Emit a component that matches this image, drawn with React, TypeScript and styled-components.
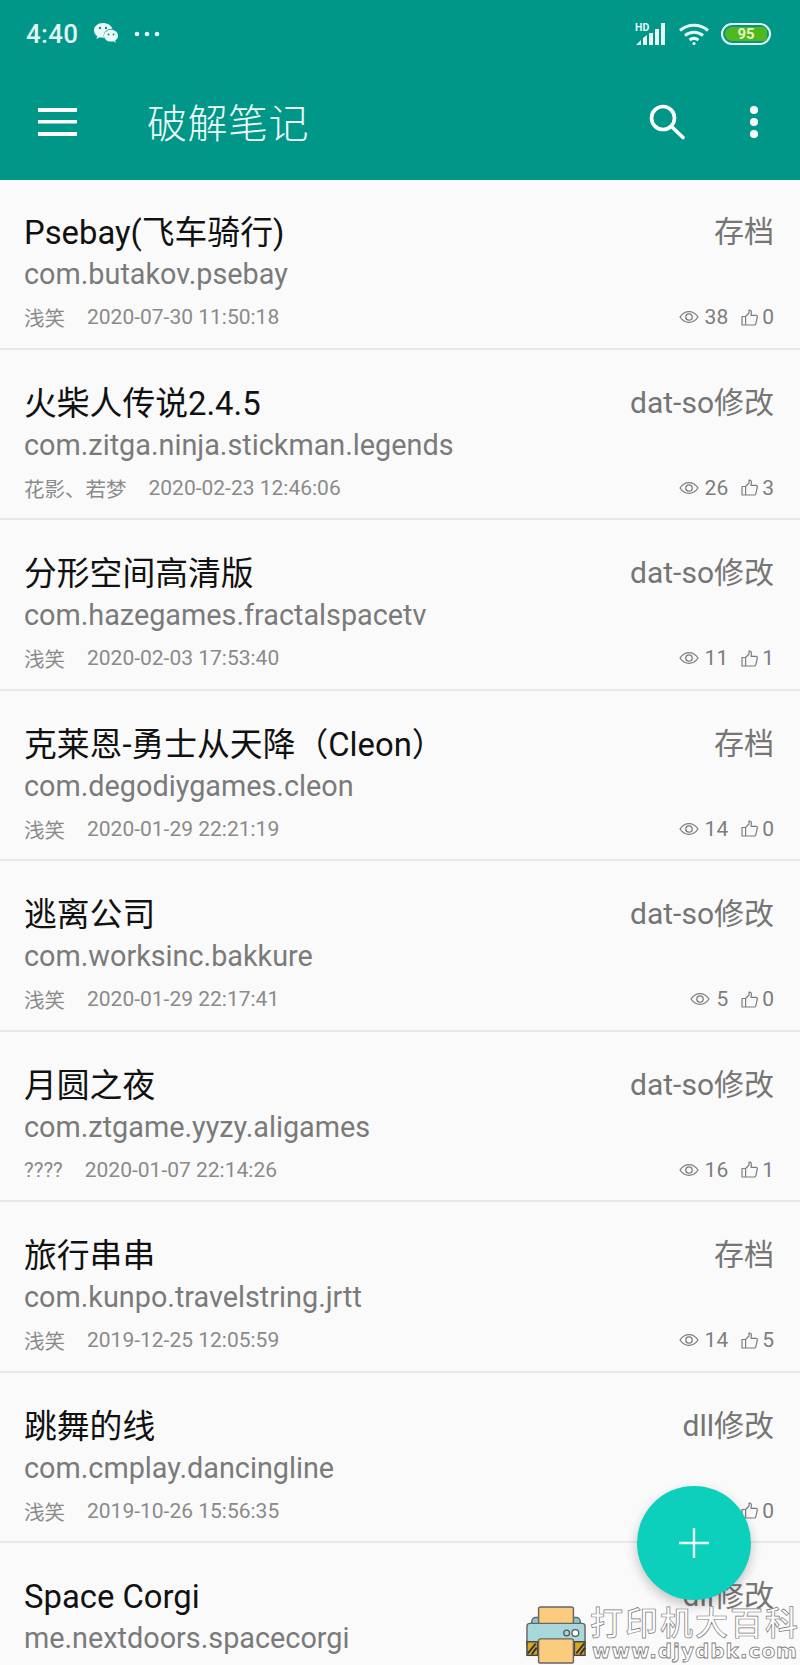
import styled, { createGlobalStyle } from 'styled-components'

const GlobalStyle = createGlobalStyle`
   html, body {
      margin: 0;
      padding: 0;
      background: #fafafa;
   }
   * {
      box-sizing: border-box;
   }
`

const Screen = styled.div`
   position: relative;
   width: 800px;
   height: 1665px;
   overflow: hidden;
   background: #fafafa;
   font-family: Roboto, 'Noto Sans CJK SC', sans-serif;
`

const Header = styled.header`
   height: 180px;
   background: #009688;
   color: #fff;
   display: flex;
   flex-direction: column;
`

const StatusBar = styled.div`
   display: flex;
   align-items: center;
   height: 68px;
   padding: 0 29px 0 26px;
   color: #e0f5f2;
`

const Clock = styled.span`
   font-size: 26px;
   font-weight: 500;
   letter-spacing: 0.3px;
`

const StatusLeft = styled.div`
   display: flex;
   align-items: center;
   gap: 15px;
   flex: 1;
`

const StatusRight = styled.div`
   display: flex;
   align-items: center;
   gap: 11px;
`

const Battery = styled.div`
   width: 50px;
   height: 22px;
   border: 2.5px solid #e6fbf5;
   border-radius: 11px;
   padding: 2px;
   display: flex;
`

const BatteryFill = styled.div`
   flex: 1;
   background: #4fb81e;
   border-radius: 8px 4px 4px 8px;
   color: #e8f5c0;
   font-size: 15px;
   font-weight: 700;
   line-height: 14px;
   text-align: center;
`

const Toolbar = styled.div`
   display: flex;
   align-items: center;
   height: 112px;
   padding: 0 41px 4px 38px;
`

const Title = styled.h1`
   flex: 1;
   margin: 0 0 2px 69px;
   font-size: 40px;
   font-weight: 300;
   color: #f0fbf9;
   letter-spacing: 0.5px;
`

const ToolIcon = styled.svg`
   display: block;
`

const ToolGroup = styled.div`
   display: flex;
   align-items: center;
   gap: 64px;
`

const List = styled.div`
   display: flex;
   flex-direction: column;
`

const Row = styled.div`
   height: 170.5px;
   padding: 33px 26px 0 24px;
   border-bottom: 2px solid #e8e8e8;
   display: grid;
   grid-template-columns: 1fr auto;
   grid-template-rows: 42px 40px 46px;

   &:first-child {
      height: 169.5px;
      padding-top: 32px;
   }
`

const Name = styled.div`
   font-size: 32.8px;
   line-height: 42px;
   color: #111;
   white-space: nowrap;
`

const Kind = styled.div`
   font-size: 30px;
   line-height: 40px;
   color: #757575;
   text-align: right;
   white-space: nowrap;
`

const Pkg = styled.div`
   grid-column: 1 / 3;
   font-size: 28.8px;
   line-height: 40px;
   color: #7a7a7a;
   white-space: nowrap;
`

const Meta = styled.div`
   display: flex;
   align-items: center;
   gap: 22px;
   font-size: 20.5px;
   color: #8a8a8a;
   white-space: nowrap;
`

const MetaDate = styled.span`
   font-size: 21px;
`

const Stats = styled.div`
   display: flex;
   align-items: center;
   justify-content: flex-end;
   font-size: 21px;
   color: #7d7d7d;
   white-space: nowrap;
`

const StatCount = styled.span`
   margin: 0 13px 0 6px;
`

const LikeCount = styled.span`
   margin-left: 4px;
`

const Fab = styled.button`
   position: absolute;
   left: 637px;
   top: 1486px;
   width: 114px;
   height: 114px;
   border: none;
   border-radius: 50%;
   background: #0dd0bc;
   box-shadow: 0 5px 12px rgba(0, 0, 0, 0.22);
   display: flex;
   align-items: center;
   justify-content: center;
   padding: 0;
`

const Watermark = styled.div`
   position: absolute;
   left: 526px;
   top: 1603px;
   display: flex;
   gap: 4px;
`

const MarkLogo = styled.svg`
   margin-top: 2px;
`

const MarkText = styled.div`
   display: flex;
   flex-direction: column;
   align-items: center;
`

const MarkTitle = styled.div`
   font-family: 'Noto Sans CJK SC', sans-serif;
   font-size: 33px;
   line-height: 36px;
   font-weight: 500;
   letter-spacing: 2px;
   color: #fff;
   -webkit-text-stroke: 0.7px #7a7a7a;
   white-space: nowrap;
`

const MarkUrl = styled.div`
   font-family: 'DejaVu Sans', sans-serif;
   font-size: 20px;
   line-height: 24px;
   font-weight: 700;
   color: #fff;
   -webkit-text-stroke: 0.8px #7a7a7a;
   letter-spacing: 1px;
   white-space: nowrap;
`

type Item = {
   name: string
   kind: string
   pkg: string
   by?: string
   date?: string
   views?: number
   likes?: number
}

const rows: Item[] = [
   { name: 'Psebay(飞车骑行)', kind: '存档', pkg: 'com.butakov.psebay', by: '浅笑', date: '2020-07-30 11:50:18', views: 38, likes: 0 },
   { name: '火柴人传说2.4.5', kind: 'dat-so修改', pkg: 'com.zitga.ninja.stickman.legends', by: '花影、若梦', date: '2020-02-23 12:46:06', views: 26, likes: 3 },
   { name: '分形空间高清版', kind: 'dat-so修改', pkg: 'com.hazegames.fractalspacetv', by: '浅笑', date: '2020-02-03 17:53:40', views: 11, likes: 1 },
   { name: '克莱恩-勇士从天降（Cleon）', kind: '存档', pkg: 'com.degodiygames.cleon', by: '浅笑', date: '2020-01-29 22:21:19', views: 14, likes: 0 },
   { name: '逃离公司', kind: 'dat-so修改', pkg: 'com.worksinc.bakkure', by: '浅笑', date: '2020-01-29 22:17:41', views: 5, likes: 0 },
   { name: '月圆之夜', kind: 'dat-so修改', pkg: 'com.ztgame.yyzy.aligames', by: '????', date: '2020-01-07 22:14:26', views: 16, likes: 1 },
   { name: '旅行串串', kind: '存档', pkg: 'com.kunpo.travelstring.jrtt', by: '浅笑', date: '2019-12-25 12:05:59', views: 14, likes: 5 },
   { name: '跳舞的线', kind: 'dll修改', pkg: 'com.cmplay.dancingline', by: '浅笑', date: '2019-10-26 15:56:35', likes: 0 },
   { name: 'Space Corgi', kind: 'dll修改', pkg: 'me.nextdoors.spacecorgi' },
]

const EyeIcon = () => (
   <svg width="20" height="14" viewBox="0 0 20 14" fill="none" stroke="#7d7d7d" strokeWidth="1.3">
      <path d="M1 7c2.4-3.6 5.4-5.4 9-5.4s6.6 1.8 9 5.4c-2.4 3.6-5.4 5.4-9 5.4S3.4 10.6 1 7z" />
      <circle cx="10" cy="7" r="3.2" />
   </svg>
)

const ThumbIcon = () => (
   <svg width="17" height="17" viewBox="0 0 17 17" fill="none" stroke="#7d7d7d" strokeWidth="1.2" strokeLinejoin="round">
      <path d="M1 7.5h3.6V16H1zM4.6 7.5 8 4V1.2c1.4-.4 2.4.6 2.4 2L10 6.4h5c1 0 1.5.8 1.3 1.6l-1.5 6.8c-.2.8-.8 1.2-1.5 1.2H4.6" />
   </svg>
)

const WeChatIcon = () => (
   <svg width="26" height="24" viewBox="0 0 26 24">
      <path d="M10 1C4.8 1 1 4.3 1 8.4c0 2.4 1.3 4.4 3.3 5.8l-.9 2.9 3.3-1.8c1.1.3 2.2.5 3.3.5.4 0 .7 0 1-.1-.2-.7-.3-1.300-.3-2 0-3.900 3.600-7 8.100-7h.7C18.200 3.400 14.500 1 10 1z" fill="#eafaf7" />
      <path d="M25 13.700c0-3.300-3.200-5.900-7-5.900s-7 2.600-7 5.900 3.200 5.900 7 5.900c.8 0 1.600-.1 2.300-.3l2.600 1.500-.7-2.400c1.700-1.100 2.800-2.800 2.800-4.700z" fill="#eafaf7" />
      <circle cx="7" cy="6" r="1.200" fill="#009688" />
      <circle cx="13" cy="6" r="1.200" fill="#009688" />
      <circle cx="15.500" cy="12.500" r="1" fill="#009688" />
      <circle cx="20.500" cy="12.500" r="1" fill="#009688" />
   </svg>
)

const MoreDots = () => (
   <svg width="26" height="6" viewBox="0 0 26 6" fill="#e6f8f5">
      <circle cx="3" cy="3" r="2.300" />
      <circle cx="13" cy="3" r="2.300" />
      <circle cx="23" cy="3" r="2.300" />
   </svg>
)

const SignalIcon = () => (
   <svg width="32" height="24" viewBox="0 0 32 24" fill="#e6f8f5">
      <text x="0" y="9" fontSize="10.500" fontWeight="700" fontFamily="Roboto, sans-serif">HD</text>
      <path d="M1 23l5-5v5zM8 16l4-3v10H8zM14 11h4v12h-4zM20 7h4v16h-4zM26 1h4v22h-4z" />
   </svg>
)

const WifiIcon = () => (
   <svg width="32" height="23" viewBox="0 0 32 23" fill="none" stroke="#e6f8f5" strokeWidth="3">
      <path d="M2 7.500C10 .5 22 .5 30 7.500M7 12.500c5.500-4.500 12.500-4.500 18 0M11.500 17c2.800-2 6.200-2 9 0" />
      <circle cx="16" cy="20.500" r="1.600" fill="#e6f8f5" stroke="none" />
   </svg>
)

const MenuIcon = () => (
   <ToolIcon width="40" height="28" viewBox="0 0 40 28" fill="#fff">
      <rect x="0" y="0" width="39" height="4" />
      <rect x="0" y="12" width="39" height="3.500" />
      <rect x="0" y="24" width="39" height="4" />
   </ToolIcon>
)

const SearchIcon = () => (
   <ToolIcon width="36" height="36" viewBox="0 0 36 36" fill="none" stroke="#fff" strokeWidth="3.600" strokeLinecap="round">
      <circle cx="14" cy="14" r="11.500" />
      <path d="M22.500 22.500 34 33.500" />
   </ToolIcon>
)

const KebabIcon = () => (
   <ToolIcon width="10" height="34" viewBox="0 0 10 34" fill="#fff">
      <circle cx="5" cy="5" r="4" />
      <circle cx="5" cy="17" r="4" />
      <circle cx="5" cy="29" r="4" />
   </ToolIcon>
)

const PrinterLogo = () => (
   <MarkLogo width="60" height="60" viewBox="0 0 62 60">
      <rect x="6" y="12" width="50" height="14" rx="4" fill="#8fc7c9" stroke="#666" strokeWidth="1.500" />
      <rect x="13" y="1" width="36" height="28" rx="2" fill="#fbcb7e" stroke="#666" strokeWidth="1.500" />
      <rect x="1" y="18" width="60" height="24" rx="3" fill="#a9d8da" stroke="#666" strokeWidth="1.500" />
      <rect x="1" y="37" width="11" height="14" fill="#d8a820" stroke="#444" strokeWidth="1.500" />
      <rect x="50" y="37" width="11" height="14" fill="#d8a820" stroke="#444" strokeWidth="1.500" />
      <path d="M2 49l8-10M6 50l5-7M52 49l8-10M56 50l5-7" stroke="#333" strokeWidth="2" />
      <rect x="13" y="34" width="36" height="25" rx="2" fill="#fbcb7e" stroke="#666" strokeWidth="1.500" />
      <circle cx="42" cy="28" r="3" fill="none" stroke="#555" strokeWidth="1.300" />
      <circle cx="51" cy="28" r="3.500" fill="#fff" stroke="#555" strokeWidth="1.300" />
   </MarkLogo>
)

export default function App() {
   return (
      <Screen>
         <GlobalStyle />
         <Header>
            <StatusBar>
               <StatusLeft>
                  <Clock>4:40</Clock>
                  <WeChatIcon />
                  <MoreDots />
               </StatusLeft>
               <StatusRight>
                  <SignalIcon />
                  <WifiIcon />
                  <Battery>
                     <BatteryFill>95</BatteryFill>
                  </Battery>
               </StatusRight>
            </StatusBar>
            <Toolbar>
               <MenuIcon />
               <Title>破解笔记</Title>
               <ToolGroup>
                  <SearchIcon />
                  <KebabIcon />
               </ToolGroup>
            </Toolbar>
         </Header>
         <List>
            {rows.map((row) => (
               <Row key={row.pkg}>
                  <Name>{row.name}</Name>
                  <Kind>{row.kind}</Kind>
                  <Pkg>{row.pkg}</Pkg>
                  {row.by && (
                     <Meta>
                        <span>{row.by}</span>
                        <MetaDate>{row.date}</MetaDate>
                     </Meta>
                  )}
                  {row.by && (
                     <Stats>
                        {row.views !== undefined && (
                           <>
                              <EyeIcon />
                              <StatCount>{row.views}</StatCount>
                           </>
                        )}
                        <ThumbIcon />
                        <LikeCount>{row.likes}</LikeCount>
                     </Stats>
                  )}
               </Row>
            ))}
         </List>
         <Fab aria-label="add">
            <svg width="32" height="32" viewBox="0 0 32 32" stroke="#e8fbf8" strokeWidth="2.400">
               <path d="M16 1v30M1 16h30" />
            </svg>
         </Fab>
         <Watermark>
            <PrinterLogo />
            <MarkText>
               <MarkTitle>打印机大百科</MarkTitle>
               <MarkUrl>www.djydbk.com</MarkUrl>
            </MarkText>
         </Watermark>
      </Screen>
   )
}
